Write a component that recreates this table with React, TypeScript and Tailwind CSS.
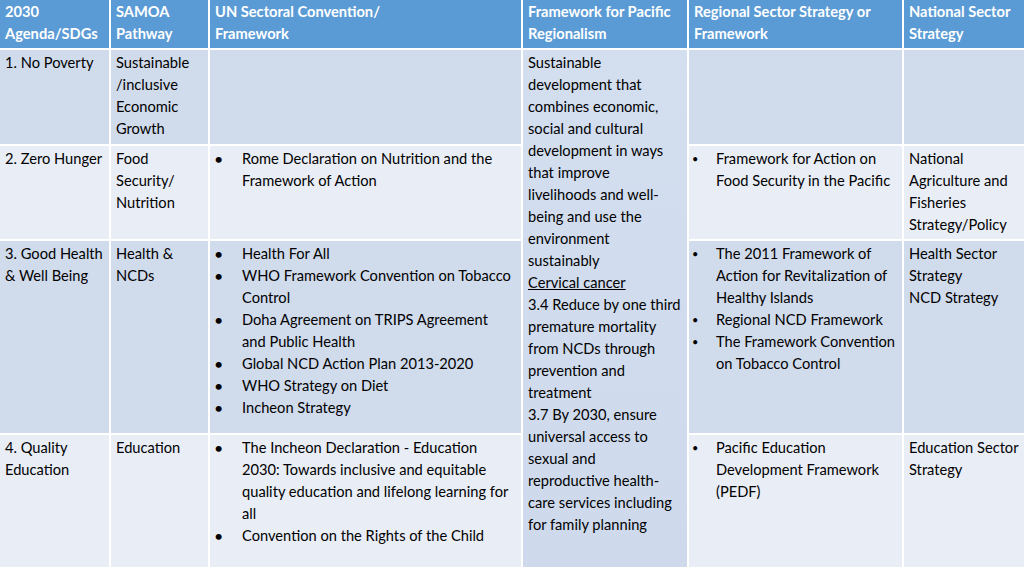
import type { ReactNode } from "react";

const font = { fontFamily: "Lato, 'Liberation Sans', sans-serif" };

function Lines({ lines }: { lines: ReactNode[] }) {
    return (
        <div>
            {lines.map((l, i) => (
                <div key={i} className="whitespace-nowrap">{l}</div>
            ))}
        </div>
    );
}

function Bullets({ items, big }: { items: string[][]; big?: boolean }) {
    return (
        <div className="flex flex-col">
            {items.map((lines, i) => (
                <div key={i} className="flex">
                    <span className={big ? "w-[28px] shrink-0 -ml-[1px] text-[16px]" : "w-[24px] shrink-0 -ml-[2px] text-[11px]"}>•</span>
                    <Lines lines={lines} />
                </div>
            ))}
        </div>
    );
}

function Head({ lines }: { lines: string[] }) {
    return (
        <div className="bg-[#5b9bd5] px-[5px] pt-[1px] font-bold text-white">
            <Lines lines={lines} />
        </div>
    );
}

function Cell({ odd, children }: { odd: boolean; children?: ReactNode }) {
    return (
        <div className={odd ? "bg-[#d0dbec] px-[5px] pt-[2px]" : "bg-[#e9edf6] px-[5px] pt-[2px]"}>
            {children}
        </div>
    );
}

export default function App() {
    return (
        <div className="h-[576px] w-[1024px] overflow-hidden bg-white text-[14.67px] leading-[22px] text-black" style={font}>
            <div className="grid grid-cols-[109px_97px_311px_164px_213px_120px] grid-rows-[48px_94px_93px_192px_132px] gap-[2px]">
                <Head lines={["2030", "Agenda/SDGs"]} />
                <Head lines={["SAMOA", "Pathway"]} />
                <Head lines={["UN Sectoral Convention/", "Framework"]} />
                <Head lines={["Framework for Pacific", "Regionalism"]} />
                <Head lines={["Regional Sector Strategy or", "Framework"]} />
                <Head lines={["National Sector", "Strategy"]} />

                {/* row 1 */}
                <Cell odd><Lines lines={["1. No Poverty"]} /></Cell>
                <Cell odd><Lines lines={["Sustainable", "/inclusive", "Economic", "Growth"]} /></Cell>
                <Cell odd />
                <div className="row-span-4 bg-gradient-to-b from-[#d3deef] to-[#cedaec] px-[5px] pt-[2px]">
                    <Lines
                        lines={[
                            "Sustainable",
                            "development that",
                            "combines economic,",
                            "social and cultural",
                            "development in ways",
                            "that improve",
                            "livelihoods and well-",
                            "being and use the",
                            "environment",
                            "sustainably",
                            <span className="underline">Cervical cancer</span>,
                            "3.4 Reduce by one third",
                            "premature mortality",
                            "from NCDs through",
                            "prevention and",
                            "treatment",
                            "3.7 By 2030, ensure",
                            "universal access to",
                            "sexual and",
                            "reproductive health-",
                            "care services including",
                            "for family planning",
                        ]}
                    />
                </div>
                <Cell odd />
                <Cell odd />

                {/* row 2 */}
                <Cell odd={false}><Lines lines={["2. Zero Hunger"]} /></Cell>
                <Cell odd={false}><Lines lines={["Food", "Security/", "Nutrition"]} /></Cell>
                <Cell odd={false}>
                    <Bullets big items={[["Rome Declaration on Nutrition and the", "Framework of Action"]]} />
                </Cell>
                <Cell odd={false}>
                    <Bullets items={[["Framework for Action on", "Food Security in the Pacific"]]} />
                </Cell>
                <Cell odd={false}>
                    <Lines lines={["National", "Agriculture and", "Fisheries", "Strategy/Policy"]} />
                </Cell>

                {/* row 3 */}
                <Cell odd><Lines lines={["3. Good Health", "& Well Being"]} /></Cell>
                <Cell odd><Lines lines={["Health &", "NCDs"]} /></Cell>
                <Cell odd>
                    <Bullets
                        big
                        items={[
                            ["Health For All"],
                            ["WHO Framework Convention on Tobacco", "Control"],
                            ["Doha Agreement on TRIPS Agreement", "and Public Health"],
                            ["Global NCD Action Plan 2013-2020"],
                            ["WHO Strategy on Diet"],
                            ["Incheon Strategy"],
                        ]}
                    />
                </Cell>
                <Cell odd>
                    <Bullets
                        items={[
                            ["The 2011 Framework of", "Action for Revitalization of", "Healthy Islands"],
                            ["Regional NCD Framework"],
                            ["The Framework Convention", "on Tobacco Control"],
                        ]}
                    />
                </Cell>
                <Cell odd>
                    <Lines lines={["Health Sector", "Strategy", "NCD Strategy"]} />
                </Cell>

                {/* row 4 */}
                <Cell odd={false}><Lines lines={["4. Quality", "Education"]} /></Cell>
                <Cell odd={false}><Lines lines={["Education"]} /></Cell>
                <Cell odd={false}>
                    <Bullets
                        big
                        items={[
                            [
                                "The Incheon Declaration - Education",
                                "2030: Towards inclusive and equitable",
                                "quality education and lifelong learning for",
                                "all",
                            ],
                            ["Convention on the Rights of the Child"],
                        ]}
                    />
                </Cell>
                <Cell odd={false}>
                    <Bullets items={[["Pacific Education", "Development Framework", "(PEDF)"]]} />
                </Cell>
                <Cell odd={false}>
                    <Lines lines={["Education Sector", "Strategy"]} />
                </Cell>
            </div>
        </div>
    );
}
